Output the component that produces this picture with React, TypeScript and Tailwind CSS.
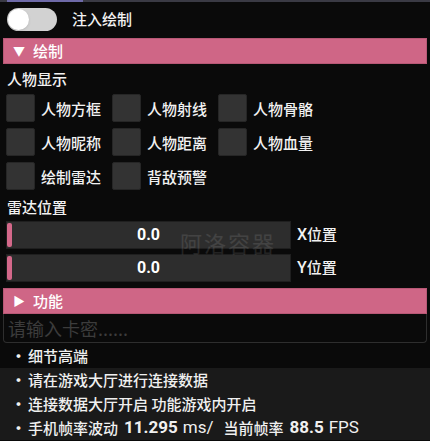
import React from 'react'

const font = { fontFamily: '"Noto Sans CJK SC", "Noto Sans", sans-serif' }
const latin = { fontFamily: 'Roboto, "Noto Sans", sans-serif' }

const checks = [
  ['人物方框', '人物射线', '人物骨骼'],
  ['人物昵称', '人物距离', '人物血量'],
  ['绘制雷达', '背敌预警'],
]

function Checkbox({ label }: { label: string }) {
  return (
    <div className="flex items-center w-[106px]">
      <div className="w-[29px] h-[28px] bg-[#333333] border border-[#262626] rounded-[2px]" />
      <span className="ml-[6px] text-[15px] font-medium text-[#f2f2f2] leading-none">{label}</span>
    </div>
  )
}

function Slider({ axis }: { axis: string }) {
  return (
    <div className="flex items-center h-[28px]">
      <div className="relative w-[285px] h-full bg-[#2d2d2d] border border-[#1f1f1f] flex items-center justify-center">
        <div className="absolute left-0 top-[1px] bottom-[1px] w-[5px] rounded-[2px] bg-[#d4688a]" />
        <span className="text-[16px] font-bold text-white" style={latin}>0.0</span>
      </div>
      <span className="ml-[6px] text-[15px] font-medium text-[#f2f2f2]">
        <span className="text-[16px]" style={latin}>{axis}</span>位置
      </span>
    </div>
  )
}

function SectionBar({ open, title }: { open: boolean; title: string }) {
  return (
    <div className="mx-[3px] h-[26px] bg-[#cf6686] border border-[#b85876] flex items-center pl-[9px] text-white">
      <span className="text-[12px] w-[20px]">{open ? '▼' : '▶'}</span>
      <span className="text-[15px] font-medium">{title}</span>
    </div>
  )
}

export default function App() {
  return (
    <div className="relative w-[430px] h-[441px] overflow-hidden bg-[#0a0a0a] text-white" style={font}>
      {/* top edge */}
      <div className="flex h-[2px]">
        <div className="w-[7px] bg-[#3a3a44]" />
        <div className="w-[76px] bg-[#6e6aa8]" />
        <div className="flex-1 bg-[#3a3a44]" />
      </div>

      {/* toggle row */}
      <div className="flex items-center px-[7px] mt-[6px] h-[23px]">
        <div className="w-[50px] h-[23px] rounded-full bg-[#d2d2d2] flex items-center px-[1px]">
          <div className="w-[21px] h-[21px] rounded-full bg-white shadow" />
        </div>
        <span className="ml-[15px] text-[15px] font-medium text-[#f2f2f2]">注入绘制</span>
      </div>

      <div className="mt-[7px]">
        <SectionBar open title="绘制" />
      </div>

      <div className="px-[7px] mt-[5px] h-[20px] flex items-center text-[15px] font-medium text-[#f2f2f2]">人物显示</div>

      <div className="px-[6px] mt-[5px] flex flex-col gap-[6px]">
        {checks.map((row, i) => (
          <div key={i} className="flex">
            {row.map(l => (
              <Checkbox key={l} label={l} />
            ))}
          </div>
        ))}
      </div>

      <div className="px-[7px] mt-[7px] h-[20px] flex items-center text-[15px] font-medium text-[#f2f2f2]">雷达位置</div>

      <div className="px-[6px] mt-[4px] flex flex-col gap-[5px]">
        <Slider axis="X" />
        <Slider axis="Y" />
      </div>

      <div className="mt-[6px]">
        <SectionBar open={false} title="功能" />
      </div>

      {/* input behind the panel */}
      <div className="mx-[3px] h-[29px] border-b border-l border-r border-[#2e2e2e] rounded-b-[4px] pl-[4px] flex items-center">
        <span className="text-[18px] leading-none text-[#3c3c3c] whitespace-nowrap">请输入卡密......</span>
      </div>

      {/* info lines */}
      <div className="mt-[1px] text-[15px] font-medium text-[#f0f0f0]">
        <div className="h-[24px] flex items-center pl-[11px]">
          <span className="w-[17px] font-bold">·</span>细节高端
        </div>
        <div className="bg-[#1a1a1a]">
          <div className="h-[24px] flex items-center pl-[11px]">
            <span className="w-[17px] font-bold">·</span>请在游戏大厅进行连接数据
          </div>
          <div className="h-[24px] flex items-center pl-[11px]">
            <span className="w-[17px] font-bold">·</span>连接数据大厅开启 功能游戏内开启
          </div>
          <div className="h-[24px] flex items-center pl-[11px] whitespace-nowrap">
            <span className="w-[17px] font-bold">·</span>手机帧率波动
            <span className="ml-[6px] text-[17px] font-bold" style={latin}>11.295</span>
            <span className="ml-[5px] text-[17px] font-normal" style={latin}>ms/</span>
            <span className="ml-[10px]">当前帧率</span>
            <span className="ml-[6px] text-[17px] font-bold" style={latin}>88.5</span>
            <span className="ml-[5px] text-[17px] font-normal" style={latin}>FPS</span>
          </div>
        </div>
      </div>

      {/* faint background watermark */}
      <span className="absolute left-[180px] top-[226px] text-[22px] tracking-[2px] text-white opacity-[0.1] pointer-events-none">阿洛容器</span>
    </div>
  )
}
